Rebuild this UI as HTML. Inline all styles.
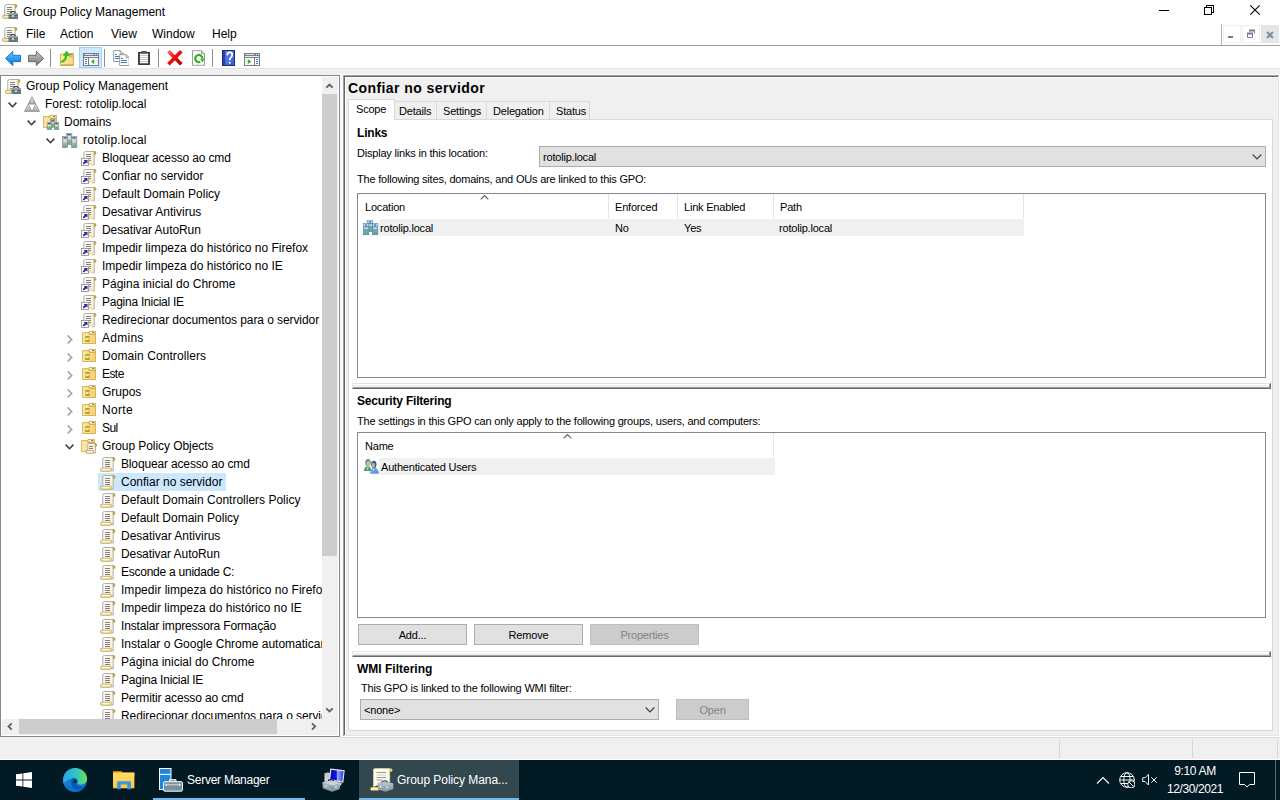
<!DOCTYPE html>
<html lang="en"><head><meta charset="utf-8"><title>Group Policy Management</title>
<style>
*{box-sizing:border-box}
html,body{margin:0;padding:0}
body{width:1280px;height:800px;overflow:hidden;background:#f0f0f0;font-family:"Liberation Sans",sans-serif;font-size:12px;color:#000;position:relative}
div,span,svg,i,b{position:absolute}
svg{overflow:visible}
.ic16{width:16px;height:16px}
#defs{width:0;height:0;left:-10px}
#titlebar{left:0;top:0;width:1280px;height:23px;background:#fff}
.ttl{left:23px;top:5px;line-height:14px;white-space:nowrap}
#menubar{left:0;top:23px;width:1280px;height:23px;background:#fff;border-bottom:1px solid #a0a0a0}
.mi{top:4px;line-height:14px;white-space:nowrap}
.mdisep{left:1221px;top:1px;width:1px;height:21px;background:#b4b4b4}
.mdib{top:2px;width:18px;height:18px;border:1px solid #f0f0f0;background:#fff}
.mdib svg{left:0;top:0}
.mdix{background:#e5e5e5;border-color:#e5e5e5}
#toolbar{left:0;top:46px;width:1280px;height:23px;background:#fff;border-bottom:1px solid #e3e3e3}
.tsep{top:3px;width:1px;height:18px;background:#8d8d8d}
.tbsel{top:1px;width:23px;height:21px;background:#cce8ff;border:1px solid #99d1ff}
#tree{left:0;top:75px;width:340px;height:662px;border:1px solid #828790;background:#fff}
#treec{left:1px;top:1px;width:320px;height:642px;overflow:hidden}
.tr{left:0;width:600px;height:18px}
.tt{top:1px;height:17px;line-height:16px;padding:0 2px;white-space:nowrap}
.selbg{top:0;height:18px;background:#cce8ff}
.chev{}
#vsb{left:321px;top:1px;width:16px;height:642px;background:#f0f0f0}
#hsb{left:1px;top:643px;width:320px;height:16px;background:#f0f0f0}
#sbc{left:321px;top:643px;width:16px;height:16px;background:#f0f0f0}
.thumb{left:0;width:15px;background:#cdcdcd}
.thumbh{top:0;height:15px;background:#cdcdcd}
#rpane{left:344px;top:75px;width:936px;height:662px;background:#f0f0f0}
#rpane:before{content:"";position:absolute;left:-1px;top:0;width:937px;height:662px;box-shadow:inset -1px -1px 0 #fff,inset 1px 1px 0 #a0a0a0,inset -2px -2px 0 #e3e3e3,inset 2px 2px 0 #696969,inset 3px 3px 0 #fff}
.hd{left:4px;top:5px;font-weight:bold;font-size:14px;line-height:16px;letter-spacing:.42px;white-space:nowrap}
#tabpage{left:4px;top:44px;width:925px;height:612px;background:#fff;border:1px solid #d9d9d9}
.tab{border:1px solid #d9d9d9;border-bottom:none;border-left:none;background:#f0f0f0;font-size:11px;letter-spacing:-.2px}
.tab span{white-space:nowrap;line-height:13px}
.seltab{background:#fff;z-index:2;border-left:1px solid #d9d9d9}
.tx{font-size:11px;letter-spacing:-.2px;line-height:13px;white-space:nowrap}
.bh{font-size:12px;font-weight:bold;letter-spacing:0;line-height:13px;white-space:nowrap}
.combo{height:21px;background:#e1e1e1;border:1px solid #adadad;font-size:11px;letter-spacing:-.2px}
.combo span{left:3px;top:4px;line-height:13px;white-space:nowrap}
.combo svg{right:2px;top:6px}
.lv{border:1px solid #828790;background:#fff}
.lvh{top:0;height:24px;border-right:1px solid #e5e5e5;font-size:11px;letter-spacing:-.2px;box-sizing:content-box}
.lvh span{left:6px;top:7px;line-height:13px;white-space:nowrap}
.sort{left:50%;top:1px;margin-left:-3px}
.lvr{height:17px;background:#f0f0f0}
.lvt{font-size:11px;letter-spacing:-.2px;line-height:13px;white-space:nowrap}
.btn{height:21px;background:#e1e1e1;border:1px solid #adadad;font-size:11px;letter-spacing:-.2px;text-align:center;line-height:19px;padding-top:1px}
.btn.dis{background:#ccc;border-color:#bfbfbf;color:#838383}
.split{left:8px;width:919px;height:6px;background:#f0f0f0;border-top:1px solid #e3e3e3;border-left:1px solid #e3e3e3;border-bottom:1px solid #696969;border-right:1px solid #696969;box-shadow:inset -1px -1px 0 #a0a0a0,inset 1px 1px 0 #fff}
#status{left:0;top:737px;width:1280px;height:23px;background:#f0f0f0;border-bottom:1px solid #fff}
#status i{top:1px;width:1px;height:19px;background:#d7d7d7}
#taskbar{left:0;top:760px;width:1280px;height:40px;background:#011a24;color:#fff}
.tbi{top:0;height:40px}
.tbi span{top:13px;line-height:15px;font-size:12px;white-space:nowrap;color:#fff}
.tbi b{left:0;bottom:0;width:100%;height:2px;background:#76b9ed}
.tbi.act{background:#33474f}
.tbu{bottom:0;height:2px;background:#76b9ed}
.clk{left:1145px;width:100px;font-size:12px;line-height:14px;white-space:nowrap;text-align:center}
.showd{left:1275px;top:0;width:1px;height:40px;background:#5a6a72}
#vsplit{left:340px;top:74px;width:3px;height:663px;background:#fafafa}
#topw{left:340px;top:74px;width:940px;height:1px;background:#fbfbfb}
#stline{left:340px;top:737px;width:940px;height:1px;background:#dcdcdc}

</style></head>
<body>
<svg id="defs" width="0" height="0" aria-hidden="true"><defs>
<linearGradient id="g-srvb" x1="0" y1="0" x2="0" y2="1"><stop offset="0" stop-color="#a8cce8"/><stop offset="1" stop-color="#6c94bc"/></linearGradient>
<linearGradient id="g-ublue" x1="0" y1="0" x2="1" y2="1"><stop offset="0" stop-color="#84bcf0"/><stop offset="1" stop-color="#4c8cd0"/></linearGradient>
<linearGradient id="g-edge1" x1="0" y1="0" x2="1" y2="0"><stop offset="0" stop-color="#2aa6e8"/><stop offset=".55" stop-color="#2fc4c8"/><stop offset="1" stop-color="#6ce64c"/></linearGradient>
<linearGradient id="g-edge2" x1="0" y1="0" x2="0" y2="1"><stop offset="0" stop-color="#1b8fe0"/><stop offset="1" stop-color="#0f6fd0"/></linearGradient>
<linearGradient id="g-mon" x1="0" y1="0" x2="1" y2="0"><stop offset="0" stop-color="#0404c4"/><stop offset=".45" stop-color="#1018d8"/><stop offset=".55" stop-color="#98a8f8"/><stop offset="1" stop-color="#2838e8"/></linearGradient>
<linearGradient id="g-tbox" x1="0" y1="0" x2="0" y2="1"><stop offset="0" stop-color="#b8c6cc"/><stop offset="1" stop-color="#8494a0"/></linearGradient>
<linearGradient id="g-fy" x1="0" y1="0" x2="0" y2="1"><stop offset="0" stop-color="#ffdc6c"/><stop offset="1" stop-color="#fcc840"/></linearGradient>
<linearGradient id="g-back" x1="0" y1="0" x2="0" y2="1"><stop offset="0" stop-color="#7cd0ff"/><stop offset=".5" stop-color="#2c9cf0"/><stop offset="1" stop-color="#1470d0"/></linearGradient>
<linearGradient id="g-fwd" x1="0" y1="0" x2="0" y2="1"><stop offset="0" stop-color="#d0d0d0"/><stop offset=".5" stop-color="#a0a0a0"/><stop offset="1" stop-color="#787878"/></linearGradient>
<linearGradient id="g-help" x1="0" y1="0" x2="1" y2="1"><stop offset="0" stop-color="#6c8cf0"/><stop offset="1" stop-color="#3458d0"/></linearGradient>
<linearGradient id="g-del" x1="0" y1="0" x2="1" y2="1"><stop offset="0" stop-color="#ff6060"/><stop offset=".45" stop-color="#f01010"/><stop offset="1" stop-color="#b00000"/></linearGradient>
<linearGradient id="g-paper" x1="0" y1="0" x2="1" y2="1"><stop offset="0" stop-color="#fffdf2"/><stop offset="1" stop-color="#fdf0bc"/></linearGradient>
<linearGradient id="g-tri" x1="0" y1="0" x2="0" y2="1"><stop offset="0" stop-color="#f4f4f4"/><stop offset="1" stop-color="#a4a4a4"/></linearGradient>
<linearGradient id="g-srv" x1="0" y1="0" x2="0" y2="1"><stop offset="0" stop-color="#c9d1d8"/><stop offset="1" stop-color="#8c98a4"/></linearGradient>
<linearGradient id="g-sq" x1="0" y1="0" x2="0" y2="1"><stop offset="0" stop-color="#a88c1c"/><stop offset=".5" stop-color="#ecd868"/><stop offset="1" stop-color="#9c7c10"/></linearGradient>
<linearGradient id="g-fold" x1="0" y1="0" x2="1" y2="0"><stop offset="0" stop-color="#fdeaa4"/><stop offset="1" stop-color="#f8d67c"/></linearGradient>
<linearGradient id="g-box" x1="0" y1="0" x2="0" y2="1"><stop offset="0" stop-color="#9aaab2"/><stop offset="1" stop-color="#5c6c74"/></linearGradient>
<symbol id="i-gpmc" viewBox="0 0 16 16"><path d="M2.750 12.500V3.200Q2.750 1.500 4.500 1.500H13.200V15H11.500" fill="url(#g-paper)" stroke="#a6a6a6" stroke-width=".9"/><path d="M13.300 1.400Q15.200 1.400 15 3.200Q14.800 4.800 13.300 4.600z" fill="#c8b05c" stroke="#a48c34" stroke-width=".6"/><path d="M5 4.500h5M5 6.500h5M5 8.500h5M5 10.500h5" stroke="#7c7cac"/><rect x=".5" y="12.300" width="7" height="3" rx="1.400" fill="#f9ebb2" stroke="#b8a45c" stroke-width=".9"/><path d="M8.800 10.200Q8.800 8.500 11 8.500Q13.200 8.500 13.200 10.200" fill="none" stroke="#2a2a2a" stroke-width="1.200"/><rect x="6.500" y="10" width="9.500" height="6" fill="url(#g-box)"/><path d="M6.500 12.500h9.500" stroke="#4a5a62" stroke-width=".8"/><rect x="10.300" y="12" width="1.400" height="2" fill="#f0f4f6"/></symbol>
<symbol id="i-forest" viewBox="0 0 16 16"><path d="M8 .8L11.700 8H4.300z" fill="url(#g-tri)" stroke="#8c8c8c" stroke-width=".8" stroke-linejoin="round"/><path d="M4.200 8.200L7.900 15.400H.5z" fill="url(#g-tri)" stroke="#8c8c8c" stroke-width=".8" stroke-linejoin="round"/><path d="M11.800 8.200L15.500 15.400H8.100z" fill="url(#g-tri)" stroke="#8c8c8c" stroke-width=".8" stroke-linejoin="round"/></symbol>
<symbol id="i-domains" viewBox="0 0 16 16"><path d="M.600 2.600H6L7.200 4.500H13.500V13.500H.600z" fill="url(#g-fold)" stroke="#d4ac4c" stroke-width=".9"/><path d="M6.500 2.500L7 1.400H13.500V4.500H7.500z" fill="#f6d67a" stroke="#d4ac4c" stroke-width=".9"/><rect x="8" y="2" width="2" height="1" fill="#fff"/><rect x="10" y="2" width="2" height="1" fill="#4a86e8"/><rect x="7.3" y="5.3" width="4.6" height="7.2" fill="url(#g-srv)" stroke="#6c7c8c" stroke-width=".5"/><rect x="8.3" y="6.3" width="2.5999999999999996" height="1" fill="#2c3c4c"/><rect x="8.3" y="8.3" width="2.5999999999999996" height="1" fill="#f4f6f8"/><rect x="9.099999999999998" y="9.7" width="1.800" height="1.800" fill="#34e01c"/><rect x="4.1" y="8.1" width="4.6" height="7.6" fill="url(#g-srv)" stroke="#6c7c8c" stroke-width=".5"/><rect x="5.1" y="9.1" width="2.5999999999999996" height="1" fill="#2c3c4c"/><rect x="5.1" y="11.1" width="2.5999999999999996" height="1" fill="#f4f6f8"/><rect x="5.8999999999999995" y="12.899999999999999" width="1.800" height="1.800" fill="#34e01c"/><rect x="11.3" y="8.1" width="4.6" height="7.6" fill="url(#g-srv)" stroke="#6c7c8c" stroke-width=".5"/><rect x="12.3" y="9.1" width="2.5999999999999996" height="1" fill="#2c3c4c"/><rect x="12.3" y="11.1" width="2.5999999999999996" height="1" fill="#f4f6f8"/><rect x="13.100000000000001" y="12.899999999999999" width="1.800" height="1.800" fill="#34e01c"/></symbol>
<symbol id="i-domain" viewBox="0 0 16 16"><rect x="4.4" y="1.2" width="5.5" height="11.3" fill="url(#g-srv)" stroke="#6c7c8c" stroke-width=".5"/><rect x="5.4" y="2.2" width="3.5" height="1" fill="#2c3c4c"/><rect x="5.4" y="4.2" width="3.5" height="1" fill="#f4f6f8"/><rect x="5.4" y="6.2" width="3.5" height="1" fill="#f4f6f8"/><rect x="7.1000000000000005" y="9.7" width="1.800" height="1.800" fill="#34e01c"/><rect x="0.4" y="4.4" width="5.3" height="11.3" fill="url(#g-srv)" stroke="#6c7c8c" stroke-width=".5"/><rect x="1.4" y="5.4" width="3.3" height="1" fill="#2c3c4c"/><rect x="1.4" y="7.4" width="3.3" height="1" fill="#f4f6f8"/><rect x="1.4" y="9.4" width="3.3" height="1" fill="#f4f6f8"/><rect x="2.9000000000000004" y="12.900000000000002" width="1.800" height="1.800" fill="#34e01c"/><rect x="9.4" y="4.4" width="5.5" height="11.3" fill="url(#g-srv)" stroke="#6c7c8c" stroke-width=".5"/><rect x="10.4" y="5.4" width="3.5" height="1" fill="#2c3c4c"/><rect x="10.4" y="7.4" width="3.5" height="1" fill="#f4f6f8"/><rect x="10.4" y="9.4" width="3.5" height="1" fill="#f4f6f8"/><rect x="12.100000000000001" y="12.900000000000002" width="1.800" height="1.800" fill="#34e01c"/></symbol>
<symbol id="i-link" viewBox="0 0 16 16"><path d="M2.750 12.500V3.200Q2.750 1.500 4.500 1.500H13.200V15H11.500" fill="url(#g-paper)" stroke="#a6a6a6" stroke-width=".9"/><path d="M13.300 1.400Q15.200 1.400 15 3.200Q14.800 4.800 13.300 4.600z" fill="#c8b05c" stroke="#a48c34" stroke-width=".6"/><path d="M5 4.500h5M5 6.500h5M5 8.500h5M5 10.500h5" stroke="#7c7cac"/><path d="M8 12.400h3.500v2.600h-3.500z" fill="#f3e3a0"/><rect x=".5" y="8.500" width="7" height="7" fill="#fff" stroke="#a0a0a0"/><path d="M2.300 13.900L5.200 11" stroke="#2c2c9c" stroke-width="1.900"/><path d="M2.600 9.900h3.900v3.900z" fill="#2c2c9c"/></symbol>
<symbol id="i-ou" viewBox="0 0 16 16"><path d="M1.600 2.600H7L8.200 4.500H14.500V13.500H1.600z" fill="url(#g-fold)" stroke="#d4ac4c" stroke-width=".9"/><path d="M7.500 2.500L8 1.400H14.500V4.500H8.500z" fill="#f6d67a" stroke="#d4ac4c" stroke-width=".9"/><rect x="9" y="2" width="2" height="1" fill="#fff"/><rect x="11" y="2" width="2" height="1" fill="#4a86e8"/><rect x="9.500" y="5" width="4.500" height="8" fill="#f6d272" opacity=".7"/><rect x="4.200" y="6" width="4.600" height="5.800" fill="url(#g-sq)"/><path d="M5.500 8.500h2M5.200 9.500h1.500" stroke="#fff8d8" stroke-width=".8"/></symbol>
<symbol id="i-gpoc" viewBox="0 0 16 16"><path d="M.600 2.600H6L7.200 4.500H13.500V13.500H.600z" fill="url(#g-fold)" stroke="#d4ac4c" stroke-width=".9"/><path d="M6.500 2.500L7 1.400H13.500V4.500H7.500z" fill="#f6d67a" stroke="#d4ac4c" stroke-width=".9"/><rect x="8" y="2" width="2" height="1" fill="#fff"/><rect x="10" y="2" width="2" height="1" fill="#4a86e8"/><path d="M6.800 13V6.500Q6.800 5.500 8 5.500H14.300V15.200H12.500" fill="url(#g-paper)" stroke="#a6a6a6" stroke-width=".9"/><path d="M14.400 5.500Q16 5.500 15.900 7.200Q15.700 8.700 14.400 8.600z" fill="#c8b05c" stroke="#a48c34" stroke-width=".6"/><path d="M8 8.500h4M8 10.500h4" stroke="#7c7cac"/><rect x="4.800" y="12.500" width="8" height="2.800" rx="1.300" fill="#f9ebb2" stroke="#b8a45c" stroke-width=".9"/><path d="M6 13.500h5" stroke="#fffdf0" stroke-width=".9"/></symbol>
<symbol id="i-gpo" viewBox="0 0 16 16"><path d="M2.750 12.500V3.200Q2.750 1.500 4.500 1.500H13.200V15H11.500" fill="url(#g-paper)" stroke="#a6a6a6" stroke-width=".9"/><path d="M13.300 1.400Q15.200 1.400 15 3.200Q14.800 4.800 13.300 4.600z" fill="#c8b05c" stroke="#a48c34" stroke-width=".6"/><path d="M5 4.500h5M5 6.500h5M5 8.500h5M5 10.500h5" stroke="#7c7cac"/><rect x=".5" y="12.300" width="11" height="3" rx="1.400" fill="#f9ebb2" stroke="#b8a45c" stroke-width=".9"/><path d="M2 13.300h7.500" stroke="#fffdf0" stroke-width=".9"/></symbol>
<symbol id="i-users" viewBox="0 0 16 16"><path d="M1 12Q1 7.500 4.600 7.300Q8.200 7.500 8.200 12z" fill="#4ca464"/><path d="M3.600 8.500L4.600 11L5.600 8.500z" fill="#d8ecd8"/><ellipse cx="5" cy="3.600" rx="2.800" ry="3.500" fill="#6c9874"/><ellipse cx="5.300" cy="4.400" rx="1.700" ry="2.500" fill="#c8c0b4"/><path d="M7 14.700Q7 9 11.400 8.700Q15.800 9 15.800 14.700z" fill="url(#g-ublue)"/><rect x="9.700" y="8" width="2" height="1.700" fill="#6c4830"/><path d="M9.800 9.600L10.700 12L11.600 9.600z" fill="#d8e8f8"/><ellipse cx="10.800" cy="5.400" rx="2.700" ry="3.600" fill="#2c6088"/><ellipse cx="10.300" cy="6.300" rx="1.700" ry="2.500" fill="#c4b4a4"/></symbol>
<symbol id="i-back" viewBox="0 0 16 16"><path d="M.500 8.400L7.800 1.300V5.300H15.500V11.700H7.800V15.500z" fill="url(#g-back)" stroke="#1c68c0" stroke-width=".9" stroke-linejoin="round"/></symbol>
<symbol id="i-fwd" viewBox="0 0 16 16"><path d="M15.600 8.400L8.300 1.300V5.300H.600V11.700H8.300V15.500z" fill="url(#g-fwd)" stroke="#5c5c5c" stroke-width=".9" stroke-linejoin="round"/></symbol>
<symbol id="i-up" viewBox="0 0 16 16"><path d="M1.500 4H9L10.200 6.200H14.500V15.400H1.500z" fill="url(#g-fold)" stroke="#d0a848" stroke-width=".9"/><path d="M9.500 4.500L10 3.400H14.500V6.200H10.500z" fill="#f6d67a" stroke="#d0a848" stroke-width=".9"/><rect x="11" y="4" width="2.500" height="1" fill="#4a86e8"/><path d="M2 15h12" stroke="#b88c30" stroke-width=".8"/><path d="M3.200 11.600Q6.800 10.200 7.300 5" fill="none" stroke="#34c424" stroke-width="2.400" stroke-linecap="round"/><path d="M4.300 5.600L7.700 .9L10.800 5.400z" fill="#34c424" stroke="#28a818" stroke-width=".5"/></symbol>
<symbol id="i-pane" viewBox="0 0 16 16"><rect x=".5" y="3.500" width="15" height="12" fill="#fff" stroke="#787c88"/><rect x="1" y="4" width="14" height="2" fill="#6c7c94"/><path d="M1.500 4.500h9" stroke="#dfe3ea"/><rect x="12" y="4" width="1" height="1" fill="#fff"/><rect x="14" y="4" width="1" height="1" fill="#fff"/><rect x="1" y="6" width="14" height="1" fill="#eef0f4"/><rect x="1" y="7" width="14" height="1" fill="#787c88"/><rect x="5" y="8" width="1" height="7" fill="#787c88"/><path d="M2 9.500h2M2 11.500h2M2 13.500h2" stroke="#3c78c8"/><rect x="11.500" y="8.500" width="3" height="6" fill="#f0f0f0"/><path d="M11.200 9v5.200L7.900 11.600z" fill="#34b424"/></symbol>
<symbol id="i-pane2" viewBox="0 0 16 16"><rect x=".5" y="3.500" width="15" height="12" fill="#fff" stroke="#787c88"/><rect x="1" y="4" width="14" height="2" fill="#6c7c94"/><path d="M1.500 4.500h9" stroke="#dfe3ea"/><rect x="12" y="4" width="1" height="1" fill="#fff"/><rect x="14" y="4" width="1" height="1" fill="#fff"/><rect x="1" y="6" width="14" height="1" fill="#eef0f4"/><rect x="1" y="7" width="14" height="1" fill="#787c88"/><rect x="10" y="8" width="1" height="7" fill="#787c88"/><path d="M12 9.500h2M12 11.500h2M12 13.500h2" stroke="#3c78c8"/><rect x="1.500" y="8.500" width="2" height="6" fill="#f0f0f0"/><path d="M3.800 9v5.200L7.300 11.600z" fill="#34b424"/></symbol>
<symbol id="i-copy" viewBox="0 0 16 16"><path d="M.700 .600H7.200L10.200 3.600V11.500H.700z" fill="#fff" stroke="#909090" stroke-width=".9"/><path d="M7.200 .600V3.600H10.200" fill="none" stroke="#909090" stroke-width=".9"/><path d="M2 4.500h2M2 6.500h5M2 8.500h5" stroke="#3c78c8"/><path d="M6.700 4.700H13.200L16.200 7.700V15.500H6.700z" fill="#fff" stroke="#909090" stroke-width=".9"/><path d="M13.200 4.700V7.700H16.200" fill="none" stroke="#909090" stroke-width=".9"/><path d="M8 8.500h2M8 10.500h6M8 12.500h6" stroke="#3c78c8"/></symbol>
<symbol id="i-paste" viewBox="0 0 16 16"><rect x="1.500" y="2.500" width="11" height="12" fill="#4c4c4c" stroke="#3c3c3c"/><rect x="3" y="3.600" width="8" height="9.600" fill="#fff"/><rect x="4.200" y="1" width="5.600" height="2.600" fill="#585858"/><path d="M3 5.500h8M3 7.500h8M3 9.500h8M3 11.500h8" stroke="#c4c4c4"/></symbol>
<symbol id="i-del" viewBox="0 0 16 16"><path d="M1.400 1.300L14.300 14.200M14.300 1.300L1.400 14.200" stroke="url(#g-del)" stroke-width="3.700" stroke-linecap="butt"/></symbol>
<symbol id="i-refresh" viewBox="0 0 16 16"><path d="M2.500 .700H11.500L14.500 3.700V15.300H2.500z" fill="#fff" stroke="#909090" stroke-width=".9"/><path d="M11.500 .700V3.700H14.500" fill="none" stroke="#909090" stroke-width=".9"/><path d="M10.300 11.800A3.600 3.600 0 1 1 12.400 8.400" fill="none" stroke="#2cb41c" stroke-width="2.200"/><path d="M10.200 8.700L14.400 8.500L12.600 12.600z" fill="#2cb41c"/></symbol>
<symbol id="i-help" viewBox="0 0 16 16"><rect x="2.500" y=".5" width="12" height="15" fill="url(#g-help)" stroke="#1c2c80"/><rect x="3" y="1" width="2.200" height="14" fill="#2444a8"/><path d="M7.300 5.200Q7.300 2.400 9.800 2.400Q12.200 2.400 12.200 4.800Q12.200 6.500 10.800 7.600Q9.700 8.500 9.700 10.200" fill="none" stroke="#fff" stroke-width="1.700"/><rect x="8.800" y="11.800" width="1.800" height="1.800" fill="#fff"/></symbol>
<symbol id="i-edge" viewBox="0 0 24 24"><circle cx="12" cy="12" r="12" fill="url(#g-edge2)"/><path d="M.4 9.500C2 3 8 -.5 14 .2C20.500 1 24.500 6.500 24 11.500C23.500 15 20.500 16.800 17 16.500C15 16.300 14 15.200 14.500 13.800C15 12 14 10.200 11.500 10C8 9.800 4 12 .6 15.500C0 13.500 0 11.500 .4 9.500z" fill="url(#g-edge1)"/><path d="M9.500 10.300C7.500 12.500 7.300 16.500 10 19.500C13.500 23 19.500 22.500 22.500 17.800C20 19.300 16 19.200 13.800 17C12.200 15.300 12.300 13 13.800 11.800C12.800 10.500 11 10 9.500 10.300z" fill="#0c5aa8"/><circle cx="12.300" cy="13.300" r="1.900" fill="#062c48"/></symbol>
<symbol id="i-explorer" viewBox="0 0 24 24"><path d="M2 3.200H10.500L12 4.600H23.400V8H2z" fill="#e8a800"/><rect x="2" y="4.700" width="21.400" height="15.600" fill="url(#g-fy)"/><path d="M2 4.700H11L12 4.200" fill="none"/><path d="M6.200 21.200V13.300H19.900V21.200H16.200V16.600H9.700V21.200z" fill="#3a96e0"/></symbol>
<symbol id="i-srvmgr" viewBox="0 0 24 24"><rect x=".5" y=".5" width="11.500" height="21" fill="#2088d8" stroke="#fff"/><path d="M1 6.400h10.500" stroke="#fff" stroke-width="1.100"/><path d="M10.500 13.700V11.700H17V13.700" fill="#7890a0" stroke="#fff"/><rect x="4.500" y="13.700" width="19" height="9.500" rx="1.500" fill="#7890a0" stroke="#fff"/><path d="M6.500 16.800H21.500M6.500 16.800l1.500-1M6.500 16.800l1.500 1M21.500 16.800l-1.500-1M21.500 16.800l-1.500 1" stroke="#fff" stroke-width=".7" fill="none"/></symbol>
<symbol id="i-mmc" viewBox="0 0 24 24"><path d="M2.500 5.500L6 4.500V13L2.500 14z" fill="#d4d8dc"/><path d="M2.500 5.500L6 4.500L8 5V14" fill="#c0c6ca"/><path d="M8.300 .5L22.700 2.300L21.300 14.800L7 12.300z" fill="#f4f6f8"/><path d="M9.300 1.700L21.600 3.200L20.400 13.400L8.200 11.300z" fill="url(#g-mon)"/><path d="M17 14L20 15.500L17.500 19" fill="#d8dce0"/><path d="M.3 14.200L10.500 12.200L18.300 15.300L17.500 21.300L10 23.800L.8 20.300z" fill="url(#g-tbox)"/><path d="M.3 14.200L10.500 12.200L18.300 15.300L10.300 17.400z" fill="#c8d4d8"/><path d="M10.300 17.400L10 23.800" stroke="#6c7c84" stroke-width=".6"/><path d="M6 12.800Q8.500 10.500 12 12.800" fill="none" stroke="#30383c" stroke-width="1.100"/><rect x="3.500" y="17" width="1.200" height="2" fill="#e8ecf0"/><rect x="13.300" y="18" width="1.200" height="2" fill="#e8ecf0"/></symbol>
<symbol id="i-gpmc24" viewBox="0 0 24 24"><path d="M3.300 19V2.200Q3.300 .4 5.500 .4H19.700V14H16" fill="#fffce4"/><path d="M3.300 2.200Q3.300 .4 5.500 .4H19.700V14" fill="none" stroke="#e8e0b0" stroke-width=".6"/><path d="M19.700 .3Q22.600 .3 22.400 2.500Q22.200 4 20 3.800z" fill="#ecd460"/><path d="M6.500 4.500h9.500M6.500 9.500h9.500M6.500 12h6" stroke="#8c80b8" stroke-width=".9"/><path d="M6.500 7h9.500" stroke="#c8c8c8" stroke-width=".9"/><rect x=".3" y="19.300" width="9" height="3.200" rx="1.600" fill="#fce880"/><path d="M1.500 20.300h6" stroke="#fff8d0" stroke-width=".8"/><path d="M7.500 15L15 13.300L23.300 15.500V21L15.800 23.800L8 21.500z" fill="url(#g-tbox)"/><path d="M7.500 15L15 13.300L23.300 15.500L15.800 17.800z" fill="#b4c0c8"/><path d="M11.500 14.200Q14.500 11.500 17.500 14" fill="none" stroke="#30383c" stroke-width="1.100"/><rect x="10" y="17.500" width="1.200" height="2.200" fill="#e8ecf0"/><rect x="16.500" y="18.300" width="1.200" height="2.200" fill="#e8ecf0"/></symbol>
<symbol id="i-net" viewBox="0 0 16 16"><circle cx="8" cy="8" r="7.300" fill="none" stroke="#fff" stroke-width=".95"/><ellipse cx="8" cy="8" rx="3.200" ry="7.300" fill="none" stroke="#fff" stroke-width=".95"/><path d="M.7 8H15.300M2 4.500H14M2 11.500H9" stroke="#fff" stroke-width=".95"/><circle cx="12.300" cy="12.300" r="3.600" fill="#011a24" stroke="#fff" stroke-width=".95"/><path d="M9.900 9.900L14.700 14.700" stroke="#fff" stroke-width=".95"/></symbol>
<symbol id="i-vol" viewBox="0 0 16 16"><path d="M.7 5.800H3L6.500 2.300V13L3 9.500H.7z" fill="none" stroke="#fff" stroke-width=".95"/><path d="M9.300 5.300L14.700 10.700M14.700 5.300L9.300 10.700" stroke="#fff" stroke-width=".95"/></symbol>
<symbol id="i-domainb" viewBox="0 0 16 16"><rect x="4.2" y="0.2" width="5.6" height="11.4" fill="url(#g-srvb)" stroke="#5880a8" stroke-width=".6"/><rect x="4.8" y="0.8" width="4.3999999999999995" height="2.300" fill="#bcdcf4"/><rect x="6.0" y="1.4" width="1.9999999999999996" height="1" rx=".5" fill="#103050"/><rect x="4.7" y="3.2" width="4.6" height=".7" fill="#5880a8"/><rect x="5.2" y="4.5" width="3.5999999999999996" height="1.600" fill="#b8d8f4"/><rect x="4.7" y="6.6000000000000005" width="4.6" height=".7" fill="#5880a8"/><rect x="6.800000000000001" y="8.6" width="2" height="2" fill="#30d820"/><rect x="0.3" y="3.3" width="5.5" height="11.5" fill="url(#g-srvb)" stroke="#5880a8" stroke-width=".6"/><rect x="0.8999999999999999" y="3.9" width="4.3" height="2.300" fill="#bcdcf4"/><rect x="2.1" y="4.5" width="1.9" height="1" rx=".5" fill="#103050"/><rect x="0.8" y="6.3" width="4.5" height=".7" fill="#5880a8"/><rect x="1.3" y="7.6" width="3.5" height="1.600" fill="#b8d8f4"/><rect x="0.8" y="9.7" width="4.5" height=".7" fill="#5880a8"/><rect x="2.8" y="11.8" width="2" height="2" fill="#30d820"/><rect x="9.4" y="3.3" width="5.5" height="11.5" fill="url(#g-srvb)" stroke="#5880a8" stroke-width=".6"/><rect x="10.0" y="3.9" width="4.3" height="2.300" fill="#bcdcf4"/><rect x="11.200000000000001" y="4.5" width="1.9" height="1" rx=".5" fill="#103050"/><rect x="9.9" y="6.3" width="4.5" height=".7" fill="#5880a8"/><rect x="10.4" y="7.6" width="3.5" height="1.600" fill="#b8d8f4"/><rect x="9.9" y="9.7" width="4.5" height=".7" fill="#5880a8"/><rect x="11.9" y="11.8" width="2" height="2" fill="#30d820"/></symbol>
</defs></svg>
<div id="titlebar"><svg class="ic16" style="left:2px;top:3px"><use href="#i-gpmc"/></svg><span class="ttl">Group Policy Management</span><svg class="wc" style="left:0;top:0" width="1280" height="23"><path d="M1159 10.500h10" stroke="#000" fill="none" shape-rendering="crispEdges"/><path d="M1204.500 7.500h7v7h-7z M1206.500 7.500v-2h7v7h-2" stroke="#000" fill="none" shape-rendering="crispEdges"/><path d="M1250.300 5.300l9.400 9.400M1259.700 5.300l-9.400 9.400" stroke="#000" stroke-width="1.100" fill="none"/></svg></div>
<div id="menubar"><svg class="ic16" style="left:2px;top:3px"><use href="#i-gpmc"/></svg><span class="mi" style="left:26px">File</span><span class="mi" style="left:60px">Action</span><span class="mi" style="left:111px">View</span><span class="mi" style="left:152px">Window</span><span class="mi" style="left:212px">Help</span><div class="mdisep"></div><div class="mdib" style="left:1223px"><svg width="16" height="16"><path d="M4 11h5" stroke="#6d7f96" stroke-width="2"/></svg></div><div class="mdib" style="left:1242px"><svg width="16" height="16"><path d="M6.5 4.5h5v3M4.500 7.5h5v4h-5z" stroke="#6d7f96" stroke-width="1" fill="none"/><path d="M6 4.500h6M4 7.500h6" stroke="#6d7f96" stroke-width="2"/></svg></div><div class="mdib mdix" style="left:1261px"><svg width="16" height="16"><path d="M5 6l6 6M11 6l-6 6" stroke="#7a8da6" stroke-width="2"/></svg></div></div>
<div id="toolbar"><svg class="ic16" style="left:5px;top:4px"><use href="#i-back"/></svg><svg class="ic16" style="left:28px;top:4px"><use href="#i-fwd"/></svg><div class="tsep" style="left:50px"></div><svg class="ic16" style="left:59px;top:4px"><use href="#i-up"/></svg><div class="tbsel" style="left:79px"></div><svg class="ic16" style="left:83px;top:4px"><use href="#i-pane"/></svg><div class="tsep" style="left:104px"></div><svg class="ic16" style="left:113px;top:4px"><use href="#i-copy"/></svg><svg class="ic16" style="left:137px;top:4px"><use href="#i-paste"/></svg><div class="tsep" style="left:158px"></div><svg class="ic16" style="left:167px;top:4px"><use href="#i-del"/></svg><svg class="ic16" style="left:190px;top:4px"><use href="#i-refresh"/></svg><div class="tsep" style="left:212px"></div><svg class="ic16" style="left:220px;top:4px"><use href="#i-help"/></svg><svg class="ic16" style="left:244px;top:4px"><use href="#i-pane2"/></svg></div>
<div id="tbgap"></div>
<div id="tree"><div id="treec"><div class="tr" style="top:0px"><svg class="ic16" style="left:3px;top:1px"><use href="#i-gpmc"/></svg><span class="tt" style="left:22px">Group Policy Management</span></div>
<div class="tr" style="top:18px"><svg class="chev" style="left:3px;top:0" width="16" height="18"><path d="M3.600 7.600l3.900 4.100l3.900-4.100" stroke="#404040" stroke-width="1.600" fill="none"/></svg><svg class="ic16" style="left:22px;top:1px"><use href="#i-forest"/></svg><span class="tt" style="left:41px">Forest: rotolip.local</span></div>
<div class="tr" style="top:36px"><svg class="chev" style="left:22px;top:0" width="16" height="18"><path d="M3.600 7.600l3.900 4.100l3.900-4.100" stroke="#404040" stroke-width="1.600" fill="none"/></svg><svg class="ic16" style="left:41px;top:1px"><use href="#i-domains"/></svg><span class="tt" style="left:60px">Domains</span></div>
<div class="tr" style="top:54px"><svg class="chev" style="left:41px;top:0" width="16" height="18"><path d="M3.600 7.600l3.900 4.100l3.900-4.100" stroke="#404040" stroke-width="1.600" fill="none"/></svg><svg class="ic16" style="left:60px;top:1px"><use href="#i-domain"/></svg><span class="tt" style="left:79px;letter-spacing:0.233px">rotolip.local</span></div>
<div class="tr" style="top:72px"><svg class="ic16" style="left:79px;top:1px"><use href="#i-link"/></svg><span class="tt" style="left:98px;letter-spacing:-0.152px">Bloquear acesso ao cmd</span></div>
<div class="tr" style="top:90px"><svg class="ic16" style="left:79px;top:1px"><use href="#i-link"/></svg><span class="tt" style="left:98px">Confiar no servidor</span></div>
<div class="tr" style="top:108px"><svg class="ic16" style="left:79px;top:1px"><use href="#i-link"/></svg><span class="tt" style="left:98px">Default Domain Policy</span></div>
<div class="tr" style="top:126px"><svg class="ic16" style="left:79px;top:1px"><use href="#i-link"/></svg><span class="tt" style="left:98px">Desativar Antivirus</span></div>
<div class="tr" style="top:144px"><svg class="ic16" style="left:79px;top:1px"><use href="#i-link"/></svg><span class="tt" style="left:98px;letter-spacing:-0.075px">Desativar AutoRun</span></div>
<div class="tr" style="top:162px"><svg class="ic16" style="left:79px;top:1px"><use href="#i-link"/></svg><span class="tt" style="left:98px">Impedir limpeza do histórico no Firefox</span></div>
<div class="tr" style="top:180px"><svg class="ic16" style="left:79px;top:1px"><use href="#i-link"/></svg><span class="tt" style="left:98px">Impedir limpeza do histórico no IE</span></div>
<div class="tr" style="top:198px"><svg class="ic16" style="left:79px;top:1px"><use href="#i-link"/></svg><span class="tt" style="left:98px">Página inicial do Chrome</span></div>
<div class="tr" style="top:216px"><svg class="ic16" style="left:79px;top:1px"><use href="#i-link"/></svg><span class="tt" style="left:98px;letter-spacing:-0.247px">Pagina Inicial IE</span></div>
<div class="tr" style="top:234px"><svg class="ic16" style="left:79px;top:1px"><use href="#i-link"/></svg><span class="tt" style="left:98px;letter-spacing:-0.078px">Redirecionar documentos para o servidor</span></div>
<div class="tr" style="top:252px"><svg class="chev" style="left:60px;top:0" width="16" height="18"><path d="M5.700 6.400l4 4l-4 4" stroke="#a6a6a6" stroke-width="1.600" fill="none"/></svg><svg class="ic16" style="left:79px;top:1px"><use href="#i-ou"/></svg><span class="tt" style="left:98px;letter-spacing:0.26px">Admins</span></div>
<div class="tr" style="top:270px"><svg class="chev" style="left:60px;top:0" width="16" height="18"><path d="M5.700 6.400l4 4l-4 4" stroke="#a6a6a6" stroke-width="1.600" fill="none"/></svg><svg class="ic16" style="left:79px;top:1px"><use href="#i-ou"/></svg><span class="tt" style="left:98px;letter-spacing:0.076px">Domain Controllers</span></div>
<div class="tr" style="top:288px"><svg class="chev" style="left:60px;top:0" width="16" height="18"><path d="M5.700 6.400l4 4l-4 4" stroke="#a6a6a6" stroke-width="1.600" fill="none"/></svg><svg class="ic16" style="left:79px;top:1px"><use href="#i-ou"/></svg><span class="tt" style="left:98px;letter-spacing:-0.567px">Este</span></div>
<div class="tr" style="top:306px"><svg class="chev" style="left:60px;top:0" width="16" height="18"><path d="M5.700 6.400l4 4l-4 4" stroke="#a6a6a6" stroke-width="1.600" fill="none"/></svg><svg class="ic16" style="left:79px;top:1px"><use href="#i-ou"/></svg><span class="tt" style="left:98px">Grupos</span></div>
<div class="tr" style="top:324px"><svg class="chev" style="left:60px;top:0" width="16" height="18"><path d="M5.700 6.400l4 4l-4 4" stroke="#a6a6a6" stroke-width="1.600" fill="none"/></svg><svg class="ic16" style="left:79px;top:1px"><use href="#i-ou"/></svg><span class="tt" style="left:98px;letter-spacing:0.325px">Norte</span></div>
<div class="tr" style="top:342px"><svg class="chev" style="left:60px;top:0" width="16" height="18"><path d="M5.700 6.400l4 4l-4 4" stroke="#a6a6a6" stroke-width="1.600" fill="none"/></svg><svg class="ic16" style="left:79px;top:1px"><use href="#i-ou"/></svg><span class="tt" style="left:98px;letter-spacing:-0.6px">Sul</span></div>
<div class="tr" style="top:360px"><svg class="chev" style="left:60px;top:0" width="16" height="18"><path d="M3.600 7.600l3.900 4.100l3.900-4.100" stroke="#404040" stroke-width="1.600" fill="none"/></svg><svg class="ic16" style="left:79px;top:1px"><use href="#i-gpoc"/></svg><span class="tt" style="left:98px;letter-spacing:-0.063px">Group Policy Objects</span></div>
<div class="tr" style="top:378px"><svg class="ic16" style="left:98px;top:1px"><use href="#i-gpo"/></svg><span class="tt" style="left:117px;letter-spacing:-0.152px">Bloquear acesso ao cmd</span></div>
<div class="tr" style="top:396px"><div class="selbg" style="left:96px;width:128px"></div><svg class="ic16" style="left:98px;top:1px"><use href="#i-gpo"/></svg><span class="tt" style="left:117px">Confiar no servidor</span></div>
<div class="tr" style="top:414px"><svg class="ic16" style="left:98px;top:1px"><use href="#i-gpo"/></svg><span class="tt" style="left:117px">Default Domain Controllers Policy</span></div>
<div class="tr" style="top:432px"><svg class="ic16" style="left:98px;top:1px"><use href="#i-gpo"/></svg><span class="tt" style="left:117px">Default Domain Policy</span></div>
<div class="tr" style="top:450px"><svg class="ic16" style="left:98px;top:1px"><use href="#i-gpo"/></svg><span class="tt" style="left:117px">Desativar Antivirus</span></div>
<div class="tr" style="top:468px"><svg class="ic16" style="left:98px;top:1px"><use href="#i-gpo"/></svg><span class="tt" style="left:117px;letter-spacing:-0.075px">Desativar AutoRun</span></div>
<div class="tr" style="top:486px"><svg class="ic16" style="left:98px;top:1px"><use href="#i-gpo"/></svg><span class="tt" style="left:117px;letter-spacing:-0.247px">Esconde a unidade C:</span></div>
<div class="tr" style="top:504px"><svg class="ic16" style="left:98px;top:1px"><use href="#i-gpo"/></svg><span class="tt" style="left:117px;letter-spacing:0.035px">Impedir limpeza do histórico no Firefox</span></div>
<div class="tr" style="top:522px"><svg class="ic16" style="left:98px;top:1px"><use href="#i-gpo"/></svg><span class="tt" style="left:117px">Impedir limpeza do histórico no IE</span></div>
<div class="tr" style="top:540px"><svg class="ic16" style="left:98px;top:1px"><use href="#i-gpo"/></svg><span class="tt" style="left:117px;letter-spacing:-0.156px">Instalar impressora Formação</span></div>
<div class="tr" style="top:558px"><svg class="ic16" style="left:98px;top:1px"><use href="#i-gpo"/></svg><span class="tt" style="left:117px">Instalar o Google Chrome automaticamente</span></div>
<div class="tr" style="top:576px"><svg class="ic16" style="left:98px;top:1px"><use href="#i-gpo"/></svg><span class="tt" style="left:117px">Página inicial do Chrome</span></div>
<div class="tr" style="top:594px"><svg class="ic16" style="left:98px;top:1px"><use href="#i-gpo"/></svg><span class="tt" style="left:117px;letter-spacing:-0.231px">Pagina Inicial IE</span></div>
<div class="tr" style="top:612px"><svg class="ic16" style="left:98px;top:1px"><use href="#i-gpo"/></svg><span class="tt" style="left:117px;letter-spacing:-0.129px">Permitir acesso ao cmd</span></div>
<div class="tr" style="top:630px"><svg class="ic16" style="left:98px;top:1px"><use href="#i-gpo"/></svg><span class="tt" style="left:117px;letter-spacing:-0.078px">Redirecionar documentos para o servidor</span></div>
</div><div id="vsb"><svg class="sba" style="left:0;top:0" width="16" height="17"><path d="M4.300 10.700l3.200-3.200l3.200 3.200" stroke="#606060" stroke-width="1.800" fill="none"/></svg><div class="thumb" style="top:17px;height:462px"></div><svg class="sba" style="left:0;bottom:0" width="16" height="17"><path d="M4.300 6.300l3.200 3.200l3.200-3.200" stroke="#606060" stroke-width="1.800" fill="none"/></svg></div><div id="hsb"><svg class="sba" style="left:0;top:0" width="17" height="16"><path d="M9.700 4.300l-3.200 3.200l3.200 3.200" stroke="#606060" stroke-width="1.800" fill="none"/></svg><div class="thumbh" style="left:17px;width:258px"></div><svg class="sba" style="right:0;top:0" width="17" height="16"><path d="M7 4.300l3.200 3.200l-3.200 3.200" stroke="#606060" stroke-width="1.800" fill="none"/></svg></div><div id="sbc"></div></div>
<div id="vsplit"></div><div id="topw"></div><div id="rpane"><div class="hd">Confiar no servidor</div><div id="tabpage"></div><div class="tab seltab" style="left:4px;top:24px;width:47px;height:21px"><span style="left:7px;top:3px">Scope</span></div><div class="tab" style="left:51px;top:26px;width:42px;height:18px"><span style="left:4px;top:3px">Details</span></div><div class="tab" style="left:93px;top:26px;width:50px;height:18px"><span style="left:6px;top:3px">Settings</span></div><div class="tab" style="left:143px;top:26px;width:63px;height:18px"><span style="left:6px;top:3px">Delegation</span></div><div class="tab" style="left:206px;top:26px;width:40px;height:18px"><span style="left:6px;top:3px">Status</span></div><div class="bh" style="left:13px;top:52px;letter-spacing:-.2px">Links</div><div class="tx" style="left:13px;top:72px">Display links in this location:</div><div class="combo" style="left:195px;top:71px;width:727px"><span>rotolip.local</span><svg width="12" height="8"><path d="M1.700 1.500l4.300 4.300l4.300-4.300" stroke="#404040" fill="none" stroke-width="1.200"/></svg></div><div class="tx" style="left:13px;top:98px">The following sites, domains, and OUs are linked to this GPO:</div><div class="lv" style="left:13px;top:118px;width:909px;height:185px"><div class="lvh" style="left:0;width:250px"><span style="left:7px">Location</span><svg class="sort" width="9" height="5"><path d="M.700 4.400l3.800-3.800l3.800 3.800" stroke="#5c5c5c" stroke-width="1.150" fill="none"/></svg></div><div class="lvh" style="left:251px;width:68px"><span>Enforced</span></div><div class="lvh" style="left:320px;width:95px"><span>Link Enabled</span></div><div class="lvh" style="left:416px;width:249px"><span>Path</span></div><div class="lvr" style="left:21px;top:25px;width:645px"></div><svg class="ic16" style="left:5px;top:26px"><use href="#i-domainb"/></svg><span class="lvt" style="left:22px;top:28px">rotolip.local</span><span class="lvt" style="left:257px;top:28px">No</span><span class="lvt" style="left:326px;top:28px">Yes</span><span class="lvt" style="left:421px;top:28px">rotolip.local</span></div><div class="split" style="top:308px"></div><div class="bh" style="left:13px;top:320px;letter-spacing:-.2px">Security Filtering</div><div class="tx" style="left:13px;top:340px">The settings in this GPO can only apply to the following groups, users, and computers:</div><div class="lv" style="left:13px;top:357px;width:909px;height:186px"><div class="lvh" style="left:0;width:415px"><span style="left:7px">Name</span><svg class="sort" width="9" height="5"><path d="M.700 4.400l3.800-3.800l3.800 3.800" stroke="#5c5c5c" stroke-width="1.150" fill="none"/></svg></div><div class="lvr" style="left:21px;top:25px;width:396px"></div><svg class="ic16" style="left:5px;top:26px"><use href="#i-users"/></svg><span class="lvt" style="left:23px;top:28px">Authenticated Users</span></div><div class="btn" style="left:14px;top:549px;width:109px">Add...</div><div class="btn" style="left:130px;top:549px;width:109px">Remove</div><div class="btn dis" style="left:246px;top:549px;width:109px">Properties</div><div class="split" style="top:576px"></div><div class="bh" style="left:13px;top:588px">WMI Filtering</div><div class="tx" style="left:17px;top:607px">This GPO is linked to the following WMI filter:</div><div class="combo" style="left:16px;top:624px;width:299px"><span>&lt;none&gt;</span><svg width="12" height="8"><path d="M1.700 1.500l4.300 4.300l4.300-4.300" stroke="#404040" fill="none" stroke-width="1.200"/></svg></div><div class="btn dis" style="left:332px;top:624px;width:73px">Open</div></div>
<div id="stline"></div><div id="status" style="top:738px;height:22px"><i style="left:1059px"></i><i style="left:1192px"></i><i style="left:1277px"></i></div>
<div id="taskbar"><svg style="left:16px;top:12px" width="16" height="16"><path d="M0 2.300L6.500 1.400V7.600H0z M7.300 1.300L16 0V7.600H7.300z M0 8.400H6.500V14.600L0 13.700z M7.300 8.400H16V16L7.300 14.700z" fill="#fff"/></svg><svg style="left:63px;top:8px" width="24" height="24"><use href="#i-edge"/></svg><svg style="left:111px;top:8px" width="24" height="24"><use href="#i-explorer"/></svg><div class="tbi" style="left:153px;width:152px"><svg style="left:6px;top:8px" width="24" height="24"><use href="#i-srvmgr"/></svg><span style="left:34px;letter-spacing:-.25px">Server Manager</span><b></b></div><svg style="left:322px;top:8px" width="24" height="24"><use href="#i-mmc"/></svg><div class="tbi act" style="left:359px;width:160px"><svg style="left:11px;top:8px" width="24" height="24"><use href="#i-gpmc24"/></svg><span style="left:38px;letter-spacing:-.06px">Group Policy Mana...</span><b></b></div><svg style="left:1096px;top:14px" width="14" height="12"><path d="M1 9.500l6-6l6 6" stroke="#fff" fill="none" stroke-width="1.100"/></svg><svg style="left:1119px;top:12px" width="16" height="16"><use href="#i-net"/></svg><svg style="left:1142px;top:12px" width="16" height="16"><use href="#i-vol"/></svg><span class="clk" style="top:4px;letter-spacing:-.35px">9:10 AM</span><span class="clk" style="top:22px;letter-spacing:-.4px">12/30/2021</span><svg style="left:1239px;top:12px" width="16" height="16"><path d="M.500 .500h15v12h-5l-2.500 2.600l-2.500-2.600h-5z" stroke="#fff" fill="none"/></svg><div class="showd"></div></div>
</body></html>
